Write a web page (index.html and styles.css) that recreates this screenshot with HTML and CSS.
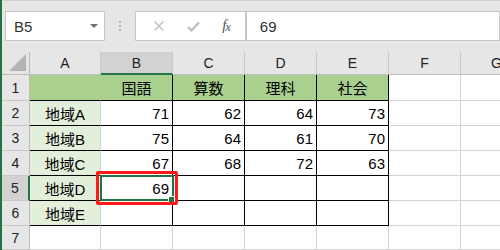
FILE: index.html
```html
<!DOCTYPE html>
<html lang="ja">
<head>
  <meta charset="UTF-8" />
  <title>Book1 - Excel</title>
  <link rel="stylesheet" href="styles.css">
</head>
<body>

<div class="excel">
  <div class="formula-bar">
    <div class="name-box">
      <span>B5</span>
      <span class="caret"></span>
    </div>
    <div class="grip"><i></i><i></i><i></i></div>
    <div class="fx-buttons">
      <svg width="12" height="12" viewBox="0 0 12 12"><path d="M1.5 1.5 L10.5 10.5 M10.5 1.5 L1.5 10.5" stroke="#bdbdbd" stroke-width="1.4" fill="none"/></svg>
      <svg width="13" height="11" viewBox="0 0 13 11"><path d="M1 6 L4.5 9.5 L12 1.5" stroke="#bdbdbd" stroke-width="2.2" fill="none"/></svg>
      <span class="fx"><i>f</i><sub>x</sub></span>
    </div>
    <div class="formula-input">69</div>
  </div>

  <div class="sheet">
    <!-- column headers -->
    <div class="c hd corner"><span class="tri"></span></div>
    <div class="c hd">A</div>
    <div class="c hd sel">B</div>
    <div class="c hd">C</div>
    <div class="c hd">D</div>
    <div class="c hd">E</div>
    <div class="c hd">F</div>
    <div class="c hd">G</div>

    <div class="c rh">1</div>
    <div class="c t g1 a1"></div>
    <div class="c t tv g1 ctr">国語</div>
    <div class="c t tv g1 ctr">算数</div>
    <div class="c t tv g1 ctr">理科</div>
    <div class="c t tv g1 ctr">社会</div>
    <div class="c"></div>
    <div class="c"></div>

    <div class="c rh">2</div>
    <div class="c t g2 ctr">地域A</div>
    <div class="c t tv num">71</div>
    <div class="c t tv num">62</div>
    <div class="c t tv num">64</div>
    <div class="c t tv num">73</div>
    <div class="c"></div>
    <div class="c"></div>

    <div class="c rh">3</div>
    <div class="c t g2 ctr">地域B</div>
    <div class="c t tv num">75</div>
    <div class="c t tv num">64</div>
    <div class="c t tv num">61</div>
    <div class="c t tv num">70</div>
    <div class="c"></div>
    <div class="c"></div>

    <div class="c rh">4</div>
    <div class="c t g2 ctr">地域C</div>
    <div class="c t tv num">67</div>
    <div class="c t tv num">68</div>
    <div class="c t tv num">72</div>
    <div class="c t tv num">63</div>
    <div class="c"></div>
    <div class="c"></div>

    <div class="c rh sel">5</div>
    <div class="c t g2 ctr">地域D</div>
    <div class="c t tv num active">69<span class="handle"></span><span class="mark"></span></div>
    <div class="c t tv"></div>
    <div class="c t tv"></div>
    <div class="c t tv"></div>
    <div class="c"></div>
    <div class="c"></div>

    <div class="c rh">6</div>
    <div class="c t g2 ctr">地域E</div>
    <div class="c t tv"></div>
    <div class="c t tv"></div>
    <div class="c t tv"></div>
    <div class="c t tv"></div>
    <div class="c"></div>
    <div class="c"></div>

    <div class="c rh">7</div>
    <div class="c"></div>
    <div class="c"></div>
    <div class="c"></div>
    <div class="c"></div>
    <div class="c"></div>
    <div class="c"></div>
    <div class="c"></div>
  </div>
</div>

</body>
</html>
```

FILE: styles.css
```css
body {
  margin: 0;
  font-family: "Liberation Sans", "Noto Sans CJK JP", sans-serif;
  background: #fff;
  overflow: hidden;
}

.excel {
  width: 500px;
  height: 250px;
  border-left: 2px solid #217346;
  box-sizing: border-box;
  overflow: hidden;
}

/* formula bar */
.formula-bar {
  height: 52px;
  box-sizing: border-box;
  background: #e6e6e6;
  border-top: 1px solid #d0d0d0;
  display: flex;
  align-items: flex-start;
  padding-top: 10px;
}

.name-box {
  margin-left: 3px;
  width: 102px;
  height: 30px;
  box-sizing: border-box;
  background: #fff;
  border: 1px solid #c6c6c6;
  display: flex;
  align-items: center;
  justify-content: space-between;
  padding: 0 6px 0 8px;
  font-size: 15px;
  color: #333;
}

.caret {
  width: 0;
  height: 0;
  border-left: 4px solid transparent;
  border-right: 4px solid transparent;
  border-top: 4px solid #707070;
}

.grip {
  width: 31px;
  height: 30px;
  display: flex;
  flex-direction: column;
  align-items: center;
  justify-content: center;
  gap: 2px;
}

.grip i {
  width: 2px;
  height: 2px;
  background: #b4b4b4;
}

.fx-buttons {
  width: 113px;
  height: 30px;
  box-sizing: border-box;
  background: #fff;
  border: 1px solid #c6c6c6;
  display: flex;
  align-items: center;
  justify-content: space-around;
  padding: 0 4px 0 6px;
}

.fx {
  font-family: "Liberation Serif", serif;
  font-style: italic;
  font-size: 15px;
  color: #555;
  letter-spacing: -1px;
}

.fx sub {
  font-size: 12px;
  vertical-align: -1px;
}

.formula-input {
  width: 260px;
  height: 30px;
  box-sizing: border-box;
  background: #fff;
  border: 1px solid #c6c6c6;
  display: flex;
  align-items: center;
  padding-left: 13px;
  font-size: 15px;
  color: #333;
}

/* sheet grid */
.sheet {
  display: grid;
  grid-template-columns: 28px 71px 72px 72px 72px 72px 72px 72px;
  grid-template-rows: 23px 26px 25px 25px 25px 25px 25px 24px;
}

.c {
  box-sizing: border-box;
  border-right: 1px solid #d4d4d4;
  border-bottom: 1px solid #d4d4d4;
  display: flex;
  align-items: center;
  padding: 0 3px;
  font-size: 15px;
  color: #000;
}

.num { justify-content: flex-end; }
.ctr { justify-content: center; }

.hd {
  background: #e6e6e6;
  border-right-color: #c8c8c8;
  border-bottom-color: #bdbdbd;
  justify-content: center;
  font-size: 14px;
  color: #222;
}

.hd.sel {
  background: #d2d2d2;
  border-bottom: 2px solid #217346;
}

.corner {
  position: relative;
  border-right-color: #bdbdbd;
}

.tri {
  position: absolute;
  right: 3px;
  bottom: 3px;
  width: 17px;
  height: 17px;
  background: #b4b4b4;
  clip-path: polygon(100% 0, 100% 100%, 0 100%);
}

.rh {
  background: #e6e6e6;
  border-right-color: #bdbdbd;
  border-bottom-color: #c8c8c8;
  justify-content: center;
  font-size: 14px;
  color: #222;
}

.rh.sel {
  background: #d2d2d2;
  border-right: 2px solid #217346;
}

.t { border-bottom-color: #000; }
.tv { border-right-color: #000; }

.g1 { background: #a9d08e; }
.g2 { background: #e2efda; }
.a1 { border-right-color: #a9d08e; }

/* active cell */
.active {
  position: relative;
  z-index: 2;
}

.active::before {
  content: "";
  position: absolute;
  top: -1px;
  left: -1px;
  right: -2px;
  bottom: -1px;
  border: 2px solid #217346;
}

.handle {
  position: absolute;
  right: -3px;
  bottom: -3px;
  width: 5px;
  height: 5px;
  background: #217346;
  border: 1px solid #fff;
}

.mark {
  position: absolute;
  top: -5px;
  left: -5px;
  right: -6px;
  bottom: -5px;
  border: 3px solid #ff1a1a;
  border-radius: 2px;
}
```
